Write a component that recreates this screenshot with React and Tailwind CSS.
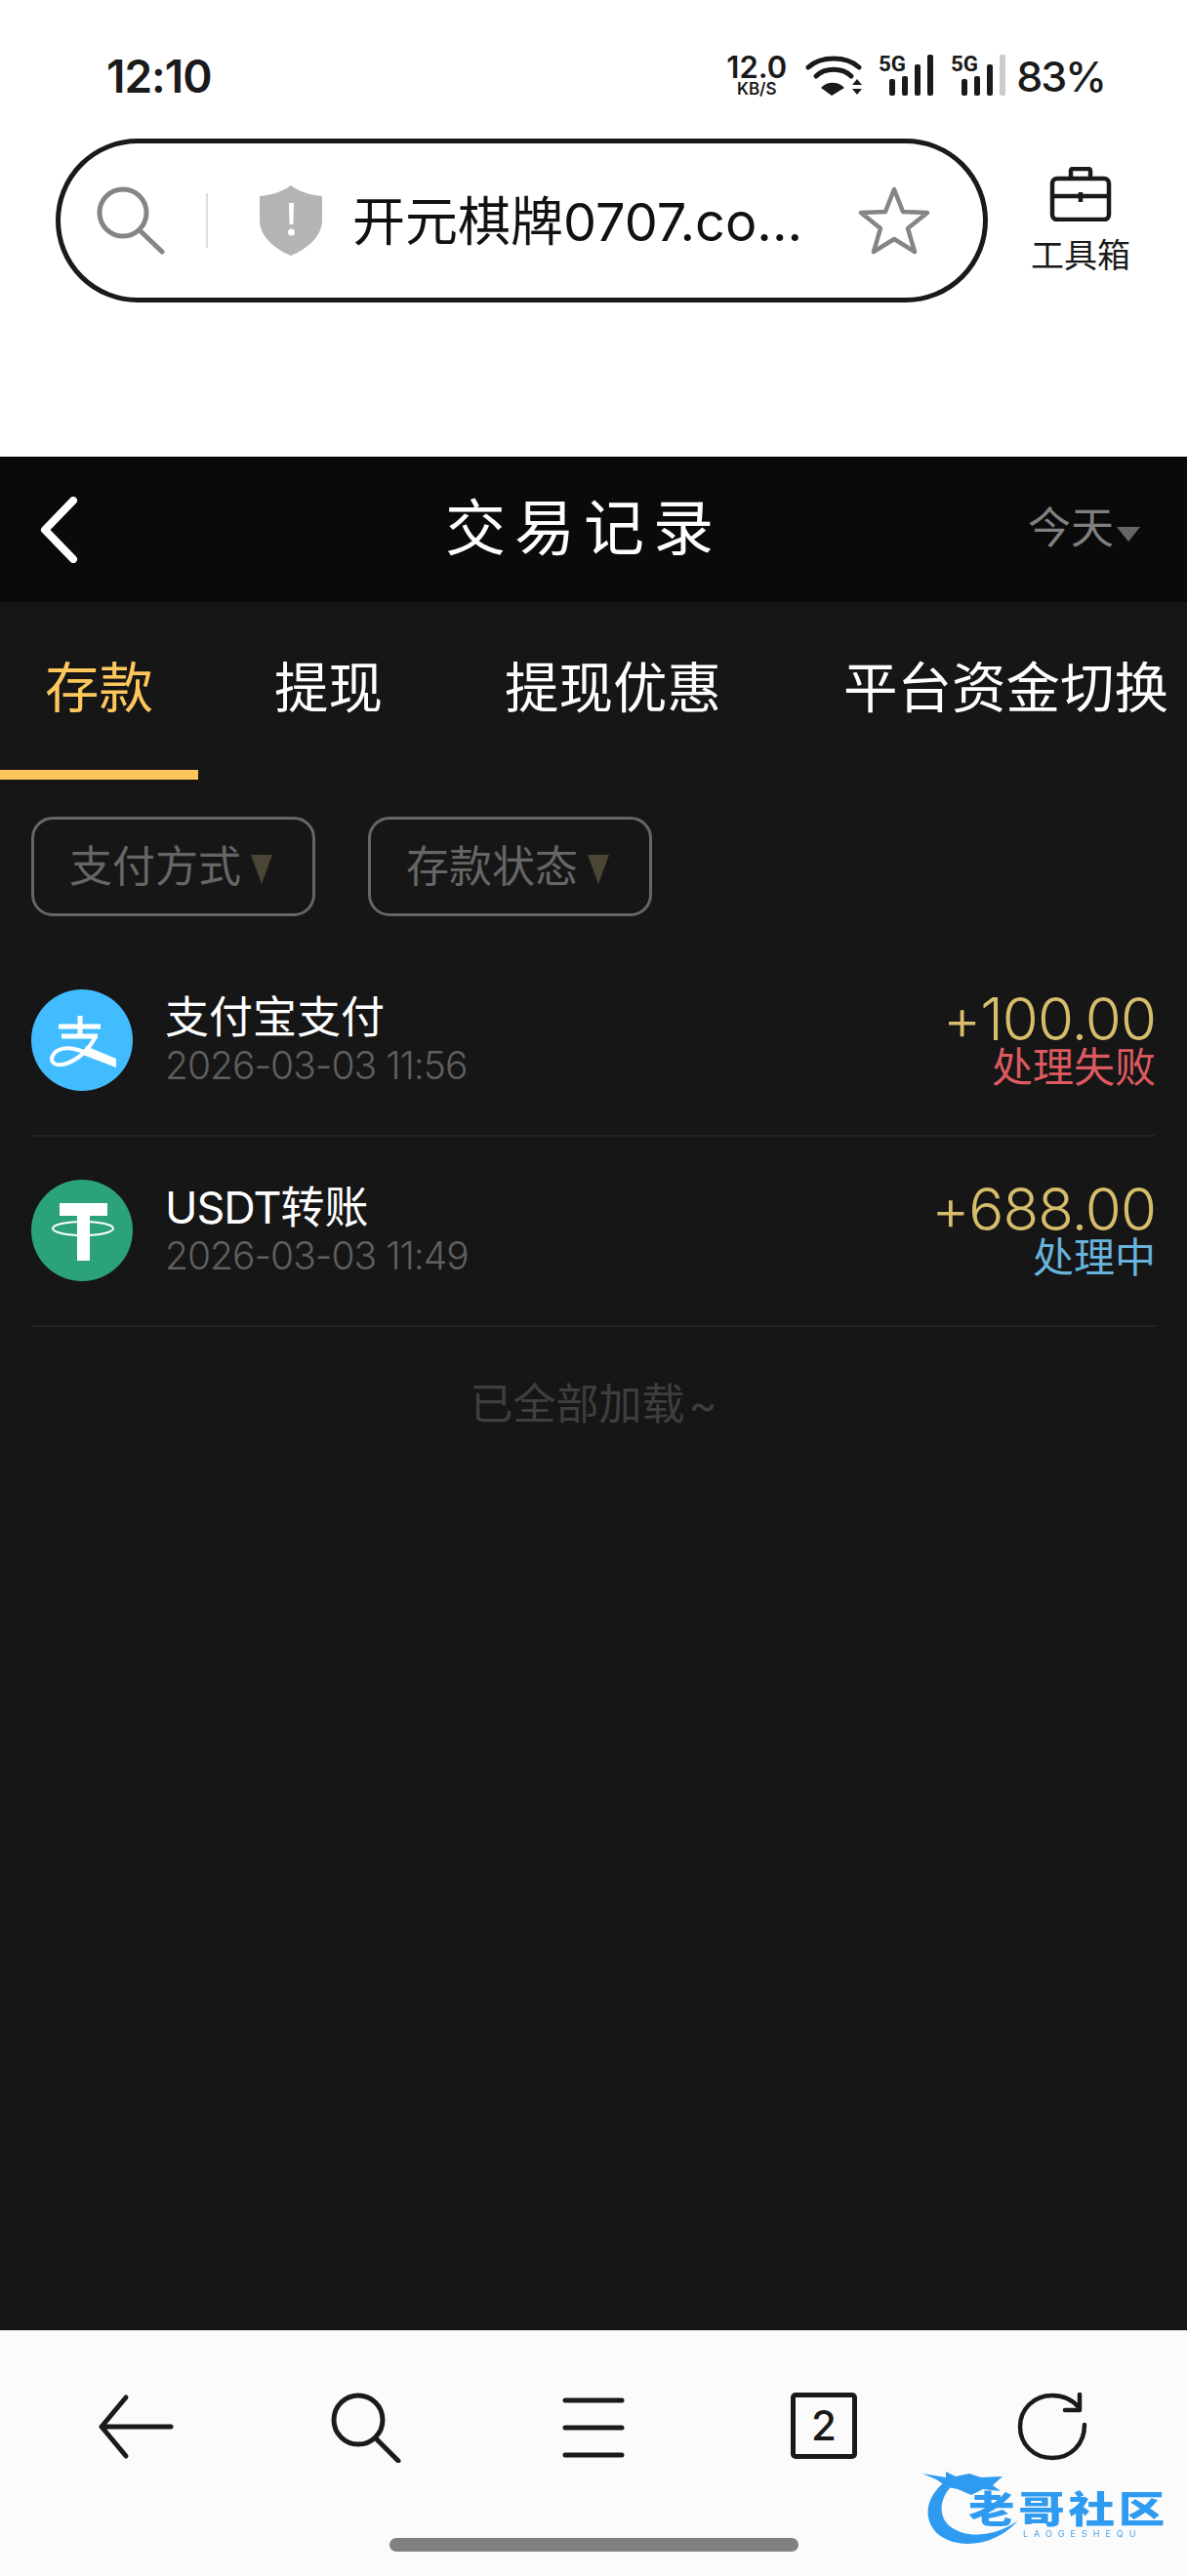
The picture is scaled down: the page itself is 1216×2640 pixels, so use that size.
const Signal = ({ last = "#1a1a1a" }) => (
  <svg className="overflow-visible" width="58" height="44" viewBox="0 0 58 44">
    <text x="0" y="17" fontFamily="Roboto" fontWeight="700" fontSize="22" fill="#1a1a1a" textLength="28" lengthAdjust="spacingAndGlyphs">5G</text>
    <rect x="11" y="25" width="6" height="17" rx="2" fill="#1a1a1a" />
    <rect x="24" y="22" width="6" height="20" rx="2" fill="#1a1a1a" />
    <rect x="37" y="10" width="6" height="32" rx="2" fill="#1a1a1a" />
    <rect x="50" y="0" width="6" height="42" rx="2" fill={last} />
  </svg>
);

const Wifi = () => (
  <svg width="60" height="44" viewBox="0 0 60 44" fill="none" stroke="#1a1a1a" strokeWidth="5" strokeLinecap="round">
    <path d="M3 13 C16 1 42 1 55 13" />
    <path d="M11 22 C20 13 38 13 47 22" />
    <path d="M27 42 L16 34 C22 27 34 27 40 34 Z" fill="#1a1a1a" stroke="none" />
    <path d="M48 31 L53 25 L58 31 Z M48 35 L58 35 L53 41 Z" fill="#1a1a1a" stroke="none" />
  </svg>
);

const Row = ({ icon, title, date, amount, status, statusColor }) => (
  <div className="mx-[32px] h-[195px] flex items-center border-b-2 border-[#222222]">
    <div className="mb-[2px]">{icon}</div>
    <div className="ml-[33px] flex-1">
      <div className="text-[45px] leading-[50px] text-white">{title}</div>
      <div className="text-[39px] leading-[48px] font-light tracking-[-1px] text-[#5f5f5f]">{date}</div>
    </div>
    <div className="text-right pt-[4px]">
      <div className="text-[60px] leading-[50px] font-light tracking-[-1px] text-[#d6bd6b]">{amount}</div>
      <div className={`text-[42px] leading-[50px] ${statusColor}`}>{status}</div>
    </div>
  </div>
);

const Alipay = () => (
  <svg className="block" width="104" height="104" viewBox="0 0 104 104">
    <circle cx="52" cy="52" r="52" fill="#41bdff" />
    <path d="M28 38 H71 M31 48 H68 M50 27 V48" stroke="#fff" strokeWidth="5" fill="none" />
    <path d="M66 48 C60 60 50 71 36 76 C24 80 19 74 22 68 C25 61 36 58 48 62 L60 66" stroke="#fff" strokeWidth="4" fill="none" />
    <path d="M56 58 L87 71 L87 80 L53 67 Z" fill="#fff" />
  </svg>
);

const Tether = () => (
  <svg className="block" width="104" height="104" viewBox="0 0 104 104">
    <circle cx="52" cy="52" r="52" fill="#2ca27a" />
    <rect x="29" y="24" width="49" height="13" fill="#fff" />
    <rect x="47" y="24" width="13" height="59" fill="#fff" />
    <ellipse cx="53" cy="50" rx="31" ry="7" fill="none" stroke="#fff" strokeWidth="2" />
  </svg>
);

const Filter = ({ label }) => (
  <div className="w-[291px] h-[102px] flex items-center pl-[36px] rounded-[22px] border-[3px] border-[#666666]">
    <span className="text-[44px] text-[#666666]">{label}</span>
    <svg className="ml-[10px] mt-[6px]" width="22" height="30" viewBox="0 0 22 30">
      <path d="M0 0 H22 L11 30 Z" fill="#4a4534" />
    </svg>
  </div>
);

export default function App() {
  return (
    <div className="relative w-full h-[2640px] flex flex-col bg-white font-['Inter','Noto_Sans_CJK_SC',sans-serif]">
      {/* browser chrome */}
      <div className="h-[468px] bg-white">
        <div className="h-[142px] pt-[14px] pl-[109px] pr-[84px] flex items-center justify-between text-[#1a1a1a]">
          <span className="text-[46px] font-semibold tracking-[-1px]">12:10</span>
          <div className="flex items-center">
            <div className="flex flex-col items-center w-[64px] font-semibold">
              <span className="text-[31px] leading-[26px]">12.0</span>
              <span className="text-[17px] leading-[18px]">KB/S</span>
            </div>
            <div className="ml-[18px]"><Wifi /></div>
            <div className="ml-[15px]"><Signal /></div>
            <div className="ml-[16px]"><Signal last="#cccccc" /></div>
            <span className="ml-[9px] text-[43px] leading-none font-medium tracking-[-2px]">83%</span>
          </div>
        </div>
        <div className="flex items-center pl-[57px]">
          <div className="w-[955px] h-[168px] rounded-full border-[5px] border-[#1a1a1a] flex items-center pl-[37px]">
            <svg width="70" height="70" viewBox="0 0 70 70" fill="none" stroke="#858585" strokeWidth="5" strokeLinecap="round">
              <circle cx="27" cy="27" r="24" />
              <path d="M44 45 L67 67" />
            </svg>
            <div className="ml-[42px] w-[2px] h-[56px] bg-[#dddddd]" />
            <svg className="ml-[52px]" width="66" height="72" viewBox="0 0 66 72">
              <path d="M33 0 C42 7 54 10 65 11 V36 C65 52 50 65 33 72 C16 65 1 52 1 36 V11 C12 10 24 7 33 0 Z" fill="#b4b4b4" />
              <path d="M31 18 H36 L35.5 40 H31.5 Z" fill="#fff" />
              <circle cx="33.5" cy="48" r="3.5" fill="#fff" />
            </svg>
            <span className="ml-[30px] mt-[3px] w-[518px] text-[54px] leading-none text-[#111111] whitespace-nowrap">开元棋牌0707.co...</span>
            <svg width="74" height="70" viewBox="0 0 74 70" fill="none" stroke="#858585" strokeWidth="4.5" strokeLinejoin="round">
              <path d="M37 3 L46 26 L71 27 L51 43 L58 67 L37 54 L16 67 L23 43 L3 27 L28 26 Z" />
            </svg>
          </div>
          <div className="ml-[44px] w-[102px] flex flex-col items-center">
            <svg width="64" height="56" viewBox="0 0 64 56" fill="none" stroke="#1a1a1a" strokeWidth="4.5" strokeLinejoin="round">
              <path d="M22 12 V4 Q22 2 24 2 H40 Q42 2 42 4 V12" />
              <rect x="3" y="12" width="58" height="42" rx="5" />
              <path d="M3 30 H61 M32 26 V36" />
            </svg>
            <span className="mt-[15px] text-[34px] leading-[40px] text-[#1a1a1a] whitespace-nowrap">工具箱</span>
          </div>
        </div>
      </div>

      {/* title bar */}
      <div className="relative h-[149px] bg-[#0a0a0a] flex items-center justify-center">
        <svg className="absolute left-[40px] top-[41px]" width="40" height="68" viewBox="0 0 40 68" fill="none" stroke="#fff" strokeWidth="8" strokeLinecap="round" strokeLinejoin="round">
          <path d="M35 4 L6 34 L35 64" />
        </svg>
        <span className="text-[62px] leading-none text-white tracking-[9px] mr-[20px] -mt-[2px]">交易记录</span>
        <div className="absolute right-[48px] top-0 h-full flex items-center">
          <span className="text-[44px] -mt-[4px] text-[#808080]">今天</span>
          <svg className="ml-[3px] mt-[10px]" width="24" height="15" viewBox="0 0 24 15">
            <path d="M0 0 H24 L12 15 Z" fill="#666666" />
          </svg>
        </div>
      </div>

      {/* content */}
      <div className="flex-1 bg-[#161616]">
        <div className="flex text-[55.5px] leading-[60px] text-white whitespace-nowrap">
          <div className="w-[203px] h-[182px] pt-[58px] pl-[46px] border-b-[10px] border-[#fdc75c] text-[#fdc75c]">存款</div>
          <div className="pt-[58px] ml-[78px]">提现</div>
          <div className="pt-[58px] ml-[125px]">提现优惠</div>
          <div className="pt-[58px] ml-[125px]">平台资金切换</div>
        </div>
        <div className="mt-[38px] pl-[32px] flex gap-[54px]">
          <Filter label="支付方式" />
          <Filter label="存款状态" />
        </div>
        <div className="mt-[31px]">
          <Row icon={<Alipay />} title="支付宝支付" date="2026-03-03 11:56" amount="+100.00" status="处理失败" statusColor="text-[#dc5a5f]" />
          <Row icon={<Tether />} title={<><span className="tracking-[-1px]">USDT</span>转账</>} date="2026-03-03 11:49" amount="+688.00" status="处理中" statusColor="text-[#68b3dc]" />
        </div>
        <div className="pt-[49px] text-center text-[44px] leading-[60px] text-[#3e3e3e]">已全部加载<span className="ml-[4px]">~</span></div>
      </div>

      {/* browser bottom bar */}
      <div className="h-[252px] bg-[#fbfbfb] border-t border-[#dddddd]">
        <div className="pt-[63px] pl-[99px] flex gap-[155px]">
          <svg width="80" height="72" viewBox="0 0 80 72" fill="none" stroke="#1a1a1a" strokeWidth="5" strokeLinecap="round" strokeLinejoin="round">
            <path d="M30 5 L5 35 L30 65 M5 35 H76" />
          </svg>
          <svg width="80" height="72" viewBox="0 0 80 72" fill="none" stroke="#1a1a1a" strokeWidth="5" strokeLinecap="round">
            <circle cx="33" cy="28" r="25" />
            <path d="M51 47 L74 70" />
          </svg>
          <svg width="80" height="72" viewBox="0 0 80 72" fill="none" stroke="#1a1a1a" strokeWidth="5" strokeLinecap="round">
            <path d="M10 8 H68 M10 36 H68 M10 64 H68" />
          </svg>
          <div className="w-[80px] h-[72px] flex justify-center">
            <div className="w-[68px] h-[68px] rounded-[5px] border-[5px] border-[#1a1a1a] flex items-center justify-center text-[42px] leading-none font-medium text-[#1a1a1a]">2</div>
          </div>
          <svg width="80" height="72" viewBox="0 0 80 72" fill="none" stroke="#1a1a1a" strokeWidth="4.5" strokeLinecap="round">
            <path d="M72 33 C72 53 58 67 39 67 C20 67 6 53 6 35 C6 17 20 3 39 3 C50 3 59 7 66 15" />
            <path d="M67 2 V18 H52" strokeLinejoin="round" />
          </svg>
        </div>
        <div className="mt-[77px] mx-auto w-[419px] h-[14px] rounded-full bg-[#808080]" />
      </div>

      {/* watermark */}
      <div className="absolute left-[945px] top-[2525px] w-[256px] h-[90px] blur-[0.6px]">
        <svg className="absolute left-0 top-0" width="110" height="90" viewBox="0 0 110 90">
          <path d="M30 14 C8 26 -2 50 12 68 C28 88 72 88 98 58 C76 74 46 78 28 64 C14 52 18 30 36 18 Z" fill="#2f9bf0" />
          <path d="M0 10 L24 14 L24 8 L34 13 L48 10 L60 14 L82 13 L72 22 L80 28 L62 26 L50 32 L36 26 L26 24 L14 16 Z" fill="#2f9bf0" />
        </svg>
        <div className="absolute left-[47px] top-[24px] origin-left scale-x-[1.25] text-[38px] leading-[44px] font-black text-[#2f9bf0] tracking-[3px] whitespace-nowrap">老哥社区</div>
        <div className="absolute left-[103px] top-[67px] text-[9px] leading-[10px] text-[#4aa3e8] tracking-[6px] whitespace-nowrap">LAOGESHEQU</div>
      </div>
    </div>
  );
}
